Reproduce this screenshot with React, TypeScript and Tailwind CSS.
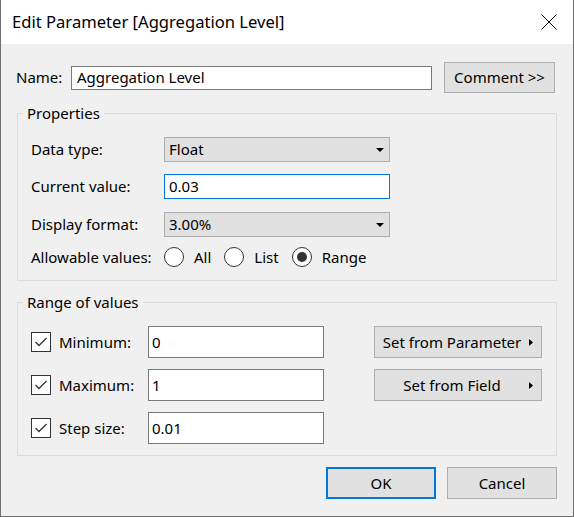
import React from "react";

const font = { fontFamily: '"Noto Sans", "Open Sans", sans-serif' };

function SelectBox({ value }: { value: string }) {
  return (
    <div className="w-[226px] h-[25px] bg-[#e1e1e1] border border-[#adadad] flex items-center justify-between pl-[4px] pr-[5px]">
      <span>{value}</span>
      <svg width="8" height="4" viewBox="0 0 8 4">
        <polygon points="0,0 8,0 4,4" fill="#000" />
      </svg>
    </div>
  );
}

function Radio({ label, checked }: { label: string; checked?: boolean }) {
  return (
    <div className="flex items-center gap-[10px] mr-[13px]">
      <div className="w-[20px] h-[20px] rounded-full border border-[#333] bg-white flex items-center justify-center">
        {checked && <div className="w-[10px] h-[10px] rounded-full bg-[#333]" />}
      </div>
      <span>{label}</span>
    </div>
  );
}

function CheckRow({ label, value }: { label: string; value: string }) {
  return (
    <div className="flex items-center h-[32px]">
      <div className="w-[20px] h-[20px] border border-[#333] bg-white flex items-center justify-center">
        <svg width="14" height="12" viewBox="0 0 14 12">
          <polyline points="1.5,6 5,9.5 12.5,2" fill="none" stroke="#333" strokeWidth="1.3" />
        </svg>
      </div>
      <span className="ml-[8px] w-[89px]">{label}</span>
      <div className="w-[176px] h-[32px] bg-white border border-[#7a7a7a] flex items-center pl-[3px]">{value}</div>
    </div>
  );
}

function ArrowButton({ label }: { label: string }) {
  return (
    <div className="w-[168px] h-[32px] bg-[#e1e1e1] border border-[#adadad] flex items-center">
      <span className="flex-1 text-center">{label}</span>
      <svg width="4" height="7" viewBox="0 0 4 7" className="mr-[8px]">
        <polygon points="0,0 4,3.5 0,7" fill="#000" />
      </svg>
    </div>
  );
}

export default function App() {
  return (
    <div
      className="w-[574px] h-[517px] border-x border-b border-[#707070] bg-[#f0f0f0] text-[15px] text-black flex flex-col"
      style={font}
    >
      {/* title bar */}
      <div className="h-[44px] bg-white flex items-center justify-between pl-[11px] pr-[16px]">
        <span className="text-[16.6px]">Edit Parameter [Aggregation Level]</span>
        <svg width="16" height="16" viewBox="0 0 16 16">
          <path d="M0.5 0.5 L15.5 15.5 M15.5 0.5 L0.5 15.5" stroke="#000" strokeWidth="1" />
        </svg>
      </div>

      <div className="flex flex-col px-[16px]">
        {/* name row */}
        <div className="flex items-center mt-[18px] h-[31px]">
          <span className="w-[55px] -ml-[1px]">Name:</span>
          <div className="w-[361px] h-[24px] bg-white border border-[#7a7a7a] flex items-center pl-[5px]">
            Aggregation Level
          </div>
          <div className="ml-[12px] w-[111px] h-[31px] bg-[#e1e1e1] border border-[#adadad] flex items-center justify-center">
            Comment &gt;&gt;
          </div>
        </div>

        {/* properties */}
        <fieldset className="mt-[10px] border border-[#dcdcdc] h-[178px]">
          <legend className="ml-[5px] px-[4px] leading-[20px]">Properties</legend>
          <div className="flex flex-col mt-[14px] pl-[13px]">
            <div className="flex items-center">
              <span className="w-[133px]">Data type:</span>
              <SelectBox value="Float" />
            </div>
            <div className="flex items-center mt-[12px]">
              <span className="w-[133px]">Current value:</span>
              <div className="w-[226px] h-[25px] bg-white border border-[#0078d7] flex items-center pl-[4px]">0.03</div>
            </div>
            <div className="flex items-center mt-[13px]">
              <span className="w-[133px]">Display format:</span>
              <SelectBox value="3.00%" />
            </div>
            <div className="flex items-center mt-[9px]">
              <span className="w-[133px]">Allowable values:</span>
              <Radio label="All" />
              <Radio label="List" />
              <Radio label="Range" checked />
            </div>
          </div>
        </fieldset>

        {/* range */}
        <fieldset className="mt-[11px] border border-[#dcdcdc] h-[164px]">
          <legend className="ml-[5px] px-[4px] leading-[20px]">Range of values</legend>
          <div className="flex mt-[14px] pl-[13px]">
            <div className="flex flex-col gap-[11px]">
              <CheckRow label="Minimum:" value="0" />
              <CheckRow label="Maximum:" value="1" />
              <CheckRow label="Step size:" value="0.01" />
            </div>
            <div className="flex flex-col gap-[11px] ml-[50px]">
              <ArrowButton label="Set from Parameter" />
              <ArrowButton label="Set from Field" />
            </div>
          </div>
        </fieldset>

        {/* bottom buttons */}
        <div className="flex justify-end gap-[11px] mt-[11px]">
          <div className="w-[110px] h-[32px] bg-[#e1e1e1] border-2 border-[#0078d7] flex items-center justify-center">OK</div>
          <div className="w-[110px] h-[32px] bg-[#e1e1e1] border border-[#adadad] flex items-center justify-center">Cancel</div>
        </div>
      </div>
    </div>
  );
}
